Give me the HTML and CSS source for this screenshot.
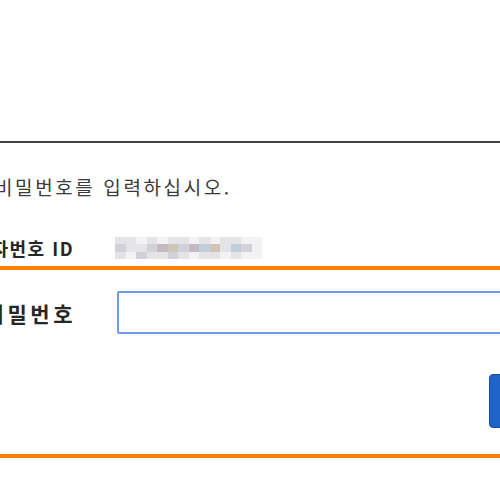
FILE: index.html
```html
<!DOCTYPE html>
<html lang="ko">
<head>
    <meta charset="UTF-8">
    <meta name="viewport" content="width=device-width, initial-scale=1.0">
    <title>비밀번호 입력</title>
    <link rel="stylesheet" href="styles.css">
</head>
<body>
    <div class="top-space"></div>
    <div class="panel">
        <p class="message">비밀번호를 입력하십시오.</p>

        <div class="row id-row">
            <span class="label">사용자번호 ID</span>
            <div class="mosaic">
                <span class="c1"></span><span class="c1"></span><span class="c0"></span><span class="c1"></span><span class="c0"></span><span class="c1"></span><span class="c1"></span><span class="c0"></span><span class="c1"></span><span class="c0"></span><span class="c1"></span><span class="c1"></span><span class="c0"></span><span class="c0"></span>
                <span class="c2"></span><span class="c1"></span><span class="c1"></span><span class="c2"></span><span class="c3"></span><span class="c4"></span><span class="c2"></span><span class="c3"></span><span class="c5"></span><span class="c4"></span><span class="c1"></span><span class="c5"></span><span class="c2"></span><span class="c0"></span>
                <span class="c1"></span><span class="c0"></span><span class="c2"></span><span class="c1"></span><span class="c1"></span><span class="c2"></span><span class="c1"></span><span class="c0"></span><span class="c1"></span><span class="c1"></span><span class="c0"></span><span class="c1"></span><span class="c0"></span><span class="c0"></span>
            </div>
        </div>

        <div class="highlight">
            <div class="row pw-row">
                <label class="label" for="pw">비밀번호</label>
                <input class="pw-input" id="pw" type="password">
            </div>
            <div class="buttons">
                <button class="btn-primary"></button>
            </div>
        </div>
    </div>
</body>
</html>
```

FILE: styles.css
```css
body {
    margin: 0;
    padding: 0;
    background-color: #fff;
    font-family: "Noto Sans CJK KR", "Noto Sans", sans-serif;
    color: #222;
    overflow: hidden;
}
.top-space {
    height: 141px;
}
.panel {
    border-top: 2px solid #444;
    margin-right: -200px;
}
.message {
    margin: 32px 0 0 -5px;
    font-size: 19px;
    line-height: 24px;
    letter-spacing: 2.6px;
    color: #3a3a3a;
    white-space: nowrap;
}
.row {
    display: flex;
    align-items: center;
}
.label {
    flex: none;
    width: 74px;
    margin-right: 41px;
    display: flex;
    justify-content: flex-end;
    white-space: nowrap;
    overflow: hidden;
    font-size: 18px;
    font-weight: bold;
    letter-spacing: 1.5px;
    color: #262626;
}
.id-row {
    margin-top: 34px;
    height: 30px;
}
.mosaic {
    display: grid;
    grid-template-columns: repeat(14, 10.5px);
    grid-auto-rows: 7.5px;
    filter: blur(0.6px);
}
.mosaic .c0 { background-color: #f2f2f4; }
.mosaic .c1 { background-color: #e4e4e8; }
.mosaic .c2 { background-color: #d2d1d8; }
.mosaic .c3 { background-color: #c4b9c0; }
.mosaic .c4 { background-color: #cec6b6; }
.mosaic .c5 { background-color: #c2cedb; }
.highlight {
    margin: 3px -10px 0;
    padding: 21px 10px 23px;
    border-top: 4px solid #ff7f00;
    border-bottom: 4px solid #ff7f00;
}
.pw-row .label {
    width: 76px;
    margin-right: 41px;
    font-size: 21px;
    letter-spacing: 3.5px;
}
.pw-input {
    width: 500px;
    height: 43px;
    box-sizing: border-box;
    border: 2px solid #6f9be6;
    border-radius: 2px;
    outline: none;
    padding: 0 8px;
}
.buttons {
    margin-top: 40px;
    padding-left: 489px;
}
.btn-primary {
    width: 90px;
    height: 54px;
    background-color: #1f63c8;
    border: 1px solid #1650a6;
    border-radius: 4px;
}
```
